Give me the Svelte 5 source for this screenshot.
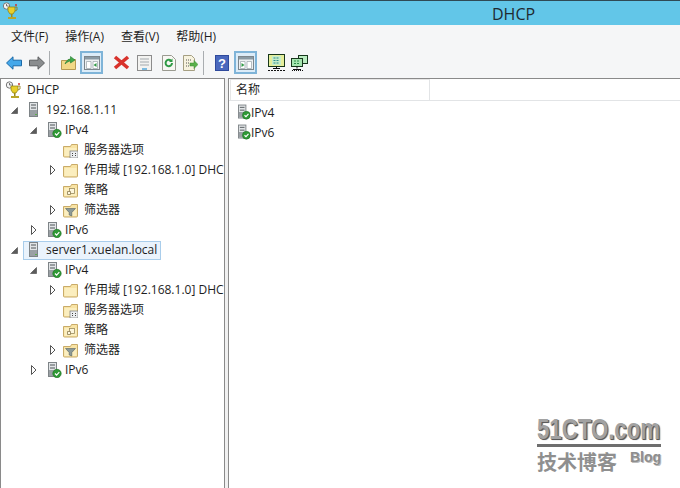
<script lang="ts">
	const menus = ['文件(F)', '操作(A)', '查看(V)', '帮助(H)'];

	const tree = [
		{ depth: 0, arrow: 'open', icon: 'server', label: '192.168.1.11' },
		{ depth: 1, arrow: 'open', icon: 'ip', label: 'IPv4' },
		{ depth: 2, arrow: '', icon: 'options', label: '服务器选项' },
		{ depth: 2, arrow: 'closed', icon: 'folder', label: '作用域 [192.168.1.0] DHCP 作用域' },
		{ depth: 2, arrow: '', icon: 'policy', label: '策略' },
		{ depth: 2, arrow: 'closed', icon: 'filter', label: '筛选器' },
		{ depth: 1, arrow: 'closed', icon: 'ip', label: 'IPv6' },
		{ depth: 0, arrow: 'open', icon: 'server', label: 'server1.xuelan.local', selected: true },
		{ depth: 1, arrow: 'open', icon: 'ip', label: 'IPv4' },
		{ depth: 2, arrow: 'closed', icon: 'folder', label: '作用域 [192.168.1.0] DHCP 作用域' },
		{ depth: 2, arrow: '', icon: 'options', label: '服务器选项' },
		{ depth: 2, arrow: '', icon: 'policy', label: '策略' },
		{ depth: 2, arrow: 'closed', icon: 'filter', label: '筛选器' },
		{ depth: 1, arrow: 'closed', icon: 'ip', label: 'IPv6' }
	];
</script>

{#snippet trophy()}
	<svg width="16" height="18" viewBox="0 0 16 18">
		<circle cx="4.500" cy="4" r="3.200" fill="#f4f4f4" stroke="#777" />
		<path d="M4.500 2v2h2" fill="none" stroke="#555" stroke-width=".8" />
		<path d="M6 5h7v4l-2 3H8L6 9z" fill="#e8cf2a" stroke="#8a7a10" stroke-width=".7" />
		<path d="M13 5h2v3l-2 1" fill="none" stroke="#8a7a10" stroke-width=".8" />
		<rect x="9" y="12" width="1.500" height="3" fill="#9a8a20" />
		<rect x="6" y="15" width="8" height="2" fill="#b9a52a" />
		<circle cx="14" cy="3" r="1" fill="#c33" />
	</svg>
{/snippet}

{#snippet serverBody()}
	<rect x=".5" y=".5" width="8" height="14" fill="#e2e5e7" stroke="#7e8487" />
	<rect x="1" y="8" width="7" height="6" fill="#9aa0a4" />
	<path d="M2 3h5M2 6h5" stroke="#4f5559" stroke-width="1" />
{/snippet}

{#snippet icon(name: string)}
	{#if name === 'server'}
		<svg width="10" height="16" viewBox="0 0 10 16">
			{@render serverBody()}
			<rect x="6" y="12" width="2" height="1" fill="#5bb04a" />
		</svg>
	{:else if name === 'ip'}
		<svg width="14" height="16" viewBox="0 0 14 16">
			{@render serverBody()}
			<circle cx="9" cy="11.500" r="4.200" fill="#2f9a35" stroke="#1c6e22" stroke-width=".6" />
			<path d="M7 11.500l1.600 1.600 2.700-3" fill="none" stroke="#fff" stroke-width="1.200" />
		</svg>
	{:else}
		<svg class="folder" width="15" height="15" viewBox="0 0 15 15">
			<path d="M.5 3.500V13a1 1 0 0 0 1 1h12a1 1 0 0 0 1-1V1.500h-6l-1 2z" fill="#f8e3a4" stroke="#c9ab68" />
			<path d="M1.500 5h12v8h-12z" fill="#fbeebf" />
			{#if name === 'options'}
				<rect x="7" y="8" width="8" height="7" fill="#eceef0" stroke="#777" stroke-width=".7" />
				<path d="M9 10h1v1H9zM12 10h1v1h-1zM9 12h1v1H9zM12 12h1v1h-1z" fill="#444" />
			{:else if name === 'policy'}
				<rect x="6.500" y="5.500" width="5" height="5" fill="#fdf6dc" stroke="#9a8a5c" stroke-width=".8" />
				<path d="M4.500 8.500h3v3h-3z" fill="#fdf6dc" stroke="#8a7a50" stroke-width=".8" />
			{:else if name === 'filter'}
				<path d="M2.500 5.500h10L8.800 9.500V13l-2.600-1V9.500z" fill="#8c9a98" stroke="#55605e" stroke-width=".6" />
			{/if}
		</svg>
	{/if}
{/snippet}

{#snippet toggleIcon(right: boolean)}
	<svg width="16" height="16" viewBox="0 0 16 16">
		<rect x=".5" y="1.500" width="15" height="13" fill="#eef1f3" stroke="#7d868c" />
		<rect x="1" y="2" width="14" height="2.500" fill="#8a9aa4" />
		<path d="M2.500 6.500h4.500v7H2.500zM9 6.500h4.500v7H9z" fill="#fff" stroke="#9aa5ab" stroke-width=".7" />
		{#if right}
			<path d="M3.500 8l3 2-3 2z" fill="#2f9a45" />
		{:else}
			<path d="M12.500 8l-3 2 3 2z" fill="#2f9a45" />
		{/if}
	</svg>
{/snippet}

{#snippet monitor(double: boolean)}
	<svg width="17" height="17" viewBox="0 0 17 17">
		{#if double}
			<rect x="7.500" y="1.500" width="9" height="8" fill="#b9ecc0" stroke="#17361c" />
			<rect x=".5" y="4.500" width="11" height="8" fill="#a6e6b0" stroke="#17361c" />
			<path d="M3 7h6M3 9.500h6" stroke="#2d8c4a" stroke-width="1.200" stroke-dasharray="2 1" />
			<path d="M6 12.500v2M2 15.500h8" stroke="#111" />
			<path d="M1 16.500h11" stroke="#111" stroke-dasharray="1 1" />
		{:else}
			<rect x=".5" y=".5" width="16" height="12" fill="#e4ee9a" stroke="#17361c" />
			<rect x="4" y="2" width="9" height="9" fill="#c6eccb" />
			<path d="M5.500 4h6M5.500 6.500h6M5.500 9h6" stroke="#2d8c8c" stroke-width="1.200" stroke-dasharray="2 1" />
			<path d="M8.500 12.500v2M5 14.500h7" stroke="#111" />
			<path d="M0 16.500h17" stroke="#111" stroke-dasharray="2 1" />
		{/if}
	</svg>
{/snippet}

<div class="window">
	<header class="titlebar">
		<span class="app-icon">{@render trophy()}</span>
		<span class="title">DHCP</span>
	</header>

	<nav class="menubar">
		{#each menus as m}
			<span class="menu">{m}</span>
		{/each}
	</nav>

	<div class="toolbar">
		<span class="tool w-back">
			<svg width="16" height="14" viewBox="0 0 16 14"><path d="M.5 7L7 .8v3.400h8.500v5.600H7v3.400z" fill="#45a8ea" stroke="#1b6aa8" /></svg>
		</span>
		<span class="tool w-fwd">
			<svg width="16" height="14" viewBox="0 0 16 14"><path d="M15.500 7L9 .8v3.400H.5v5.600H9v3.400z" fill="#8a8d8f" stroke="#5c5f61" /></svg>
		</span>
		<span class="sep first"></span>
		<span class="tool w-up">
			<svg width="15" height="15" viewBox="0 0 15 15">
				<path d="M.5 5.500v9h14v-10h-7l-1 1z" fill="#f2d886" stroke="#b79a52" />
				<path d="M4 9c1-3 3-5 5.500-5V1.500L14 5 9.500 8V6C8 6 6 7 4 9z" fill="#3fa84a" stroke="#247a30" stroke-width=".6" />
			</svg>
		</span>
		<span class="tool toggled left">{@render toggleIcon(false)}</span>
		<span class="tool w-x">
			<svg width="17" height="15" viewBox="0 0 17 15"><path d="M2 2l13 11M15 2L2 13" stroke="#d8322c" stroke-width="3.600" /></svg>
		</span>
		<span class="tool w-doc">
			<svg width="15" height="16" viewBox="0 0 15 16">
				<rect x=".5" y=".5" width="14" height="15" fill="#f3f3f1" stroke="#8c8c8c" />
				<path d="M3 4h9M3 7h9M3 10h9" stroke="#a3a9ad" stroke-width="1.200" />
				<path d="M5 14h5" stroke="#4aa3d8" stroke-width="1.400" />
			</svg>
		</span>
		<span class="tool w-ref">
			<svg width="14" height="16" viewBox="0 0 14 16">
				<path d="M.5.5h9l4 4v11H.5z" fill="#f7f7f3" stroke="#9a9a90" />
				<path d="M10 8a3.200 3.200 0 1 1-1-2.300" fill="none" stroke="#2f9a45" stroke-width="2" />
				<path d="M10.500 3.500v3.500H7z" fill="#2f9a45" />
			</svg>
		</span>
		<span class="tool w-exp">
			<svg width="15" height="16" viewBox="0 0 15 16">
				<path d="M.5.5h8l3 3v12h-11z" fill="#f7f3df" stroke="#a59f82" />
				<path d="M3 5h5M3 8h3M3 11h3" stroke="#555" stroke-dasharray="1 1" />
				<path d="M7 8h4V5.500l4 4-4 4V11H7z" fill="#58b04a" stroke="#3a8a30" stroke-width=".5" />
			</svg>
		</span>
		<span class="sep second"></span>
		<span class="tool w-help">
			<svg width="14" height="16" viewBox="0 0 14 16">
				<rect width="14" height="16" fill="#2f4a9c" />
				<rect x="1" y="1" width="12" height="14" fill="#4a68bd" />
				<text x="7" y="13" text-anchor="middle" class="qmark">?</text>
			</svg>
		</span>
		<span class="tool toggled right">{@render toggleIcon(true)}</span>
		<span class="tool w-mon1">{@render monitor(false)}</span>
		<span class="tool w-mon2">{@render monitor(true)}</span>
	</div>

	<main class="panes">
		<section class="tree">
			<div class="row root">
				<span class="root-icon">{@render trophy()}</span>
				<span class="label">DHCP</span>
			</div>
			{#each tree as node}
				<div class="row" style={`padding-left: ${8 + node.depth * 19}px`}>
					<span class="arrow">
						{#if node.arrow === 'open'}
							<svg width="9" height="9" viewBox="0 0 9 9"><path d="M7.500 1.500v6h-6z" fill="#5c5c5c" stroke="#444" stroke-width=".6" /></svg>
						{:else if node.arrow === 'closed'}
							<svg width="9" height="10" viewBox="0 0 9 10"><path d="M2.500 .5l4.500 4.500-4.500 4.500z" fill="#fff" stroke="#555" /></svg>
						{/if}
					</span>
					<span class="node-body" class:selected={node.selected}>
						<span class="node-icon">{@render icon(node.icon)}</span>
						<span class="label">{node.label}</span>
					</span>
				</div>
			{/each}
		</section>

		<section class="list">
			<div class="list-head">
				<span class="col">名称</span>
			</div>
			<div class="list-rows">
				<div class="list-row"><span class="list-icon">{@render icon('ip')}</span>IPv4</div>
				<div class="list-row"><span class="list-icon">{@render icon('ip')}</span>IPv6</div>
			</div>
		</section>
	</main>

	<div class="watermark">
		<div class="wm-logo">51CTO.com</div>
		<div class="wm-rule"></div>
		<div class="wm-sub">
			<span class="wm-cn">技术博客</span>
			<span class="wm-blog">Blog</span>
		</div>
	</div>
</div>

<style>
	:global(body) {
		margin: 0;
		overflow: hidden;
		background: #f0f0f0;
	}

	.window {
		position: relative;
		width: 680px;
		height: 488px;
		display: flex;
		flex-direction: column;
		overflow: hidden;
		font-family: 'Open Sans', 'Noto Sans CJK SC', sans-serif;
		font-size: 12px;
		color: #1e1e1e;
		background: #f0f0f0;
	}

	.titlebar {
		height: 24px;
		flex: none;
		border-top: 1px solid #2f4a55;
		background: #62c6e8;
		display: flex;
		align-items: center;
		position: relative;
	}

	.app-icon {
		display: flex;
		margin-left: 2px;
		margin-top: -4px;
	}

	.title {
		position: absolute;
		left: 492px;
		top: 3px;
		font-size: 16px;
		line-height: 20px;
		color: #1f2a30;
	}

	.menubar {
		height: 22px;
		flex: none;
		display: flex;
		align-items: center;
		padding-left: 11px;
		gap: 17px;
		background: #f5f6f7;
	}

	.menu {
		white-space: nowrap;
		color: #1e1e1e;
	}

	.toolbar {
		height: 31px;
		flex: none;
		display: flex;
		align-items: center;
		background: #f5f6f7;
	}

	.tool {
		display: flex;
		align-items: center;
		justify-content: center;
		flex: none;
	}

	.w-back { margin-left: 6px; }
	.w-fwd { margin-left: 7px; }
	.w-up { margin-left: 11px; }
	.w-x { margin-left: 10px; }
	.w-doc { margin-left: 7px; }
	.w-ref { margin-left: 10px; }
	.w-exp { margin-left: 7px; }
	.w-help { margin-left: 11px; }
	.w-mon1 { margin-left: 11px; }
	.w-mon2 { margin-left: 6px; }

	.sep {
		width: 1px;
		height: 24px;
		background: #a9adb0;
		flex: none;
	}

	.sep.first { margin-left: 4px; }
	.sep.second { margin-left: 5px; }

	.toggled {
		width: 23px;
		height: 23px;
		box-sizing: border-box;
		border: 2px solid #7fb4d8;
		background: #dcecf8;
	}

	.toggled.left { margin-left: 4px; }
	.toggled.right { margin-left: 5px; }

	.panes {
		flex: 1;
		display: flex;
		gap: 3px;
		min-height: 0;
		background: #f0f0f0;
	}

	.tree {
		width: 225px;
		flex: none;
		box-sizing: border-box;
		background: #fff;
		border: 1px solid #8a8a8a;
		border-bottom: none;
		padding-top: 1px;
		overflow: hidden;
	}

	.row {
		height: 20px;
		display: flex;
		align-items: center;
		white-space: nowrap;
		overflow: hidden;
	}

	.row:not(.root) {
		margin-left: -1px;
	}

	.root {
		padding-left: 4px;
	}

	.root-icon {
		display: flex;
		width: 22px;
		flex: none;
	}

	.arrow {
		width: 12px;
		flex: none;
		display: flex;
		align-items: center;
		justify-content: center;
		margin-right: 3px;
	}

	.node-body {
		display: flex;
		align-items: center;
		height: 19px;
		box-sizing: border-box;
		padding-left: 6px;
		padding-right: 4px;
	}

	.node-body.selected {
		background: #eaf3fc;
		outline: 1px solid #a9cdeb;
		outline-offset: -1px;
	}

	.node-icon {
		display: flex;
		width: 17px;
		flex: none;
	}

	.node-icon :global(.folder) {
		margin-left: -4px;
	}

	.label {
		line-height: 20px;
	}

	.list {
		flex: 1;
		background: #fff;
		border-left: 1px solid #8a8a8a;
		border-top: 1px solid #8a8a8a;
		min-width: 0;
	}

	.list-head {
		height: 22px;
		padding-left: 1px;
		border-bottom: 1px solid #e2e4e6;
		box-sizing: border-box;
		display: flex;
	}

	.col {
		width: 200px;
		box-sizing: border-box;
		padding-left: 5px;
		line-height: 20px;
		border-right: 1px solid #e2e4e6;
		border-left: 1px solid #e6e6e6;
		border-top: 1px solid #e6e6e6;
	}

	.list-rows {
		padding-top: 1px;
	}

	.list-row {
		height: 20px;
		display: flex;
		align-items: center;
		padding-left: 9px;
	}

	.list-icon {
		display: flex;
		width: 13px;
		overflow: visible;
	}

	.qmark {
		font-family: 'Liberation Sans', sans-serif;
		font-weight: bold;
		font-size: 13px;
		fill: #fff;
	}

	.watermark {
		position: absolute;
		left: 537px;
		top: 415px;
		width: 124px;
		color: #8d8d8d;
		pointer-events: none;
	}

	.wm-logo {
		font-family: 'Liberation Sans', sans-serif;
		font-weight: bold;
		font-size: 30px;
		line-height: 28px;
		color: #a2a2a2;
		text-shadow: 1px 1px 0 #5a5a5a, 2px 1px 1px #777;
		white-space: nowrap;
		transform: scaleX(0.74);
		transform-origin: left center;
	}

	.wm-rule {
		height: 3px;
		margin-top: 1px;
		background: #6e6e6e;
	}

	.wm-sub {
		display: flex;
		justify-content: space-between;
		margin-top: 2px;
	}

	.wm-cn {
		font-family: 'Noto Sans CJK SC', sans-serif;
		font-weight: bold;
		font-size: 20px;
		line-height: 26px;
		color: #8f8f8f;
	}

	.wm-blog {
		font-family: 'Liberation Sans', sans-serif;
		font-weight: bold;
		font-size: 14px;
		line-height: 16px;
		color: #8d8d8d;
		text-shadow: 1px 1px 0 #bbb;
	}
</style>
